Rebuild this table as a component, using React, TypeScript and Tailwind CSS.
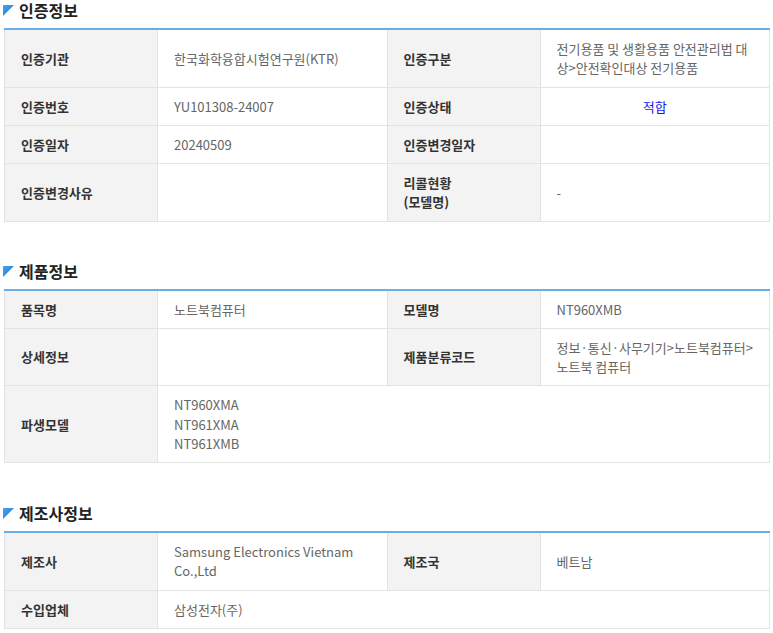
import React from "react";

const FONT = { fontFamily: '"Noto Sans CJK KR", "Noto Sans", sans-serif' };

function Title({ text }: { text: string }) {
  return (
    <div className="flex items-center h-[21px] mb-[7px]">
      <svg width="11" height="11" viewBox="0 0 11 11" className="ml-[-1px] mr-[5px] shrink-0">
        <defs>
          <linearGradient id="tg" x1="0" y1="0" x2="1" y2="1">
            <stop offset="0" stopColor="#4aa6f0" />
            <stop offset="1" stopColor="#1273d4" />
          </linearGradient>
        </defs>
        <polygon points="0,0 11,0 0,11" fill="url(#tg)" />
      </svg>
      <span className="text-[16px] font-bold text-[#222] leading-[17px]">{text}</span>
    </div>
  );
}

const th = "bg-[#f3f3f3] border border-[#e3e3e3] px-[16px] py-[9px] text-left align-middle text-[13px] leading-[19.25px] font-bold text-[#333]";
const td = "bg-white border border-[#e3e3e3] px-[16px] py-[9px] text-left align-middle text-[13px] leading-[19.25px] text-[#666]";

function Table({ children }: { children: React.ReactNode }) {
  return (
    <table className="w-full table-fixed border-collapse border-t-2 border-t-[#6aaee9]">
      <colgroup>
        <col className="w-[20%]" />
        <col className="w-[30%]" />
        <col className="w-[20%]" />
        <col className="w-[30%]" />
      </colgroup>
      <tbody>{children}</tbody>
    </table>
  );
}

function Lines({ lines }: { lines: string[] }) {
  return (
    <>
      {lines.map((l, i) => (
        <span key={i} className="block whitespace-nowrap">
          {l}
        </span>
      ))}
    </>
  );
}

export default function App() {
  return (
    <div className="bg-white w-[773px] h-[633px] overflow-hidden pl-[4px] pr-[3px]" style={FONT}>
      <Title text="인증정보" />
      <Table>
        <tr>
          <th className={th}>인증기관</th>
          <td className={td}>한국화학융합시험연구원(KTR)</td>
          <th className={th}>인증구분</th>
          <td className={td}>
            <Lines lines={["전기용품 및 생활용품 안전관리법 대", "상>안전확인대상 전기용품"]} />
          </td>
        </tr>
        <tr>
          <th className={th}>인증번호</th>
          <td className={td}>YU101308-24007</td>
          <th className={th}>인증상태</th>
          <td className={td + " !text-center !text-[#1515f0]"}>적합</td>
        </tr>
        <tr>
          <th className={th}>인증일자</th>
          <td className={td}>20240509</td>
          <th className={th}>인증변경일자</th>
          <td className={td}></td>
        </tr>
        <tr>
          <th className={th}>인증변경사유</th>
          <td className={td}></td>
          <th className={th}>
            <Lines lines={["리콜현황", "(모델명)"]} />
          </th>
          <td className={td}>-</td>
        </tr>
      </Table>

      <div className="mt-[39px]">
        <Title text="제품정보" />
        <Table>
          <tr>
            <th className={th}>품목명</th>
            <td className={td}>노트북컴퓨터</td>
            <th className={th}>모델명</th>
            <td className={td}>NT960XMB</td>
          </tr>
          <tr>
            <th className={th}>상세정보</th>
            <td className={td}></td>
            <th className={th}>제품분류코드</th>
            <td className={td}>
              <Lines lines={["정보·통신·사무기기>노트북컴퓨터>", "노트북 컴퓨터"]} />
            </td>
          </tr>
          <tr>
            <th className={th}>파생모델</th>
            <td className={td} colSpan={3}>
              <Lines lines={["NT960XMA", "NT961XMA", "NT961XMB"]} />
            </td>
          </tr>
        </Table>
      </div>

      <div className="mt-[40px]">
        <Title text="제조사정보" />
        <Table>
          <tr>
            <th className={th}>제조사</th>
            <td className={td}>
              <Lines lines={["Samsung Electronics Vietnam", "Co.,Ltd"]} />
            </td>
            <th className={th}>제조국</th>
            <td className={td}>베트남</td>
          </tr>
          <tr>
            <th className={th}>수입업체</th>
            <td className={td} colSpan={3}>
              삼성전자(주)
            </td>
          </tr>
        </Table>
      </div>
    </div>
  );
}
